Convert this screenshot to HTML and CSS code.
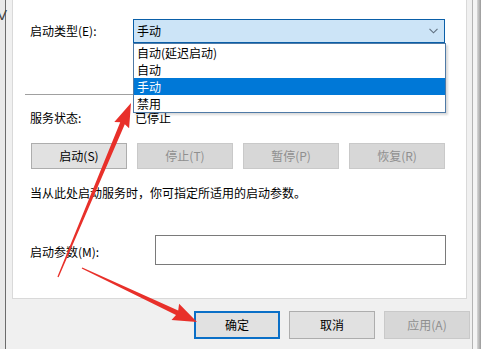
FILE: index.html
```html
<!DOCTYPE html>
<html lang="zh-CN">
<head>
<meta charset="utf-8">
<title>服务属性</title>
<link rel="stylesheet" href="styles.css">
</head>
<body>
<div class="screen">
  <div class="left-edge"><span class="bg-glyph">V</span></div>
  <div class="main">
    <div class="panel">
      <div class="row row-type">
        <span class="label label-type">启动类型(E):</span>
        <div class="combo">
          <span class="combo-value">手动</span>
          <svg class="chevron" width="9" height="6" viewBox="0 0 9 6"><path d="M0.5 0.8 L4.5 4.8 L8.5 0.8" fill="none" stroke="#5f6f7f" stroke-width="1.1"/></svg>
          <ul class="combo-list">
            <li>自动(延迟启动)</li>
            <li>自动</li>
            <li class="selected">手动</li>
            <li>禁用</li>
          </ul>
        </div>
      </div>
      <div class="separator"></div>
      <div class="row row-status">
        <span class="label label-status">服务状态:</span>
        <span class="status-value">已停止</span>
      </div>
      <div class="btn-row">
        <button class="btn">启动(S)</button>
        <button class="btn disabled">停止(T)</button>
        <button class="btn disabled">暂停(P)</button>
        <button class="btn disabled">恢复(R)</button>
      </div>
      <p class="hint">当从此处启动服务时，你可指定所适用的启动参数。</p>
      <div class="row row-param">
        <span class="label label-param">启动参数(M):</span>
        <div class="input"></div>
      </div>
    </div>
    <div class="footer">
      <button class="btn fbtn default">确定</button>
      <button class="btn fbtn">取消</button>
      <button class="btn fbtn disabled">应用(A)</button>
    </div>
  </div>
  <div class="right-edge"><div class="re-line"></div><div class="re-gap"></div><div class="re-strip"></div></div>

  <svg class="arrows" width="481" height="349" viewBox="0 0 481 349">
    <polygon fill="#e8302a" points="58.6,277.3 124.8,124.3 129.1,128.2 131,103 114.3,122.0 120.2,122.3 57.4,276.7"/>
    <polygon fill="#e8302a" points="81.7,268.6 176.0,314.9 171.5,320.0 197,322 179.1,303.7 178.2,310.4 82.3,267.4"/>
  </svg>
</div>
</body>
</html>
```

FILE: styles.css
```css
* { box-sizing: border-box; }
html, body { margin: 0; padding: 0; }
body {
  width: 481px;
  height: 349px;
  overflow: hidden;
  background: #f0f0f0;
  font-family: "Noto Sans CJK SC", "Noto Sans", sans-serif;
  font-size: 12px;
  color: #000;
}
.screen {
  position: relative;
  display: flex;
  width: 481px;
  height: 349px;
  overflow: hidden;
}
.left-edge {
  position: relative;
  width: 12px;
  flex: none;
  background: linear-gradient(to right, #e9e9e9 0, #e9e9e9 5px, #6c6c6c 5px, #6c6c6c 6px, #f0f0f0 6px);
  overflow: hidden;
}
.bg-glyph {
  position: absolute;
  left: -3px;
  top: 6px;
  font-family: "Liberation Sans", sans-serif;
  font-size: 15px;
  color: #444;
}
.main {
  width: 460px;
  flex: none;
  display: flex;
  flex-direction: column;
}
.panel {
  width: 455px;
  height: 299px;
  background: #fff;
  border: 1px solid #d9d9d9;
  border-top: none;
  padding: 19px 0 0 17px;
}
.row { display: flex; align-items: center; }
.label { flex: none; line-height: 16px; }
.row-type { height: 24px; }
.label-type { width: 103px; }
.combo {
  position: relative;
  width: 312px;
  height: 24px;
  background: #cce4f7;
  border: 1px solid #0a5fa8;
  display: flex;
  align-items: center;
  padding-left: 3px;
}
.combo-value { line-height: 16px; flex: 1; }
.chevron { margin-right: 6px; }
.combo-list {
  position: absolute;
  left: -1px;
  top: 23px;
  width: 313px;
  margin: 0;
  padding: 0;
  list-style: none;
  background: #fff;
  border: 1px solid #4f7aa6;
  box-shadow: 2px 2px 2px rgba(0,0,0,0.15);
  z-index: 2;
}
.combo-list li {
  height: 17px;
  line-height: 17px;
  padding-left: 3px;
}
.combo-list li.selected { background: #0078d7; color: #fff; }
.separator {
  margin: 51px 0 0 -5px;
  width: 415px;
  height: 1px;
  background: #a0a0a0;
}
.row-status { margin-top: 15px; height: 16px; }
.label-status { width: 105px; }
.status-value { line-height: 16px; }
.btn-row {
  display: flex;
  gap: 10px;
  margin: 17px 0 0 1px;
}
.btn {
  font-family: inherit;
  font-size: 12px;
  color: #000;
  background: #e1e1e1;
  border: 1px solid #adadad;
  padding: 0;
  margin: 0;
  width: 96px;
  height: 26px;
  line-height: 16px;
}
.btn.disabled {
  background: #d7d7d7;
  border-color: #c9c9c9;
  color: #8f8f8f;
}
.hint {
  margin: 16px 0 0 0;
  line-height: 16px;
}
.row-param { margin-top: 34px; }
.label-param { width: 125px; margin-top: 3px; }
.input {
  width: 291px;
  height: 30px;
  border: 1px solid #7a7a7a;
  background: #fff;
}
.footer {
  display: flex;
  gap: 9px;
  padding: 12px 0 0 182px;
}
.fbtn { width: 86px; height: 28px; }
.fbtn.default { border: 2px solid #0a6fc7; }
.right-edge {
  flex: none;
  width: 9px;
  display: flex;
}
.re-line { width: 1px; background: #b4b4b4; }
.re-gap { width: 4px; background: #f4f4f4; }
.re-strip { width: 4px; background: linear-gradient(to right, #d8d8d8, #9a9a9a); }
.arrows {
  position: absolute;
  left: 0;
  top: 0;
  pointer-events: none;
  z-index: 5;
}
```
